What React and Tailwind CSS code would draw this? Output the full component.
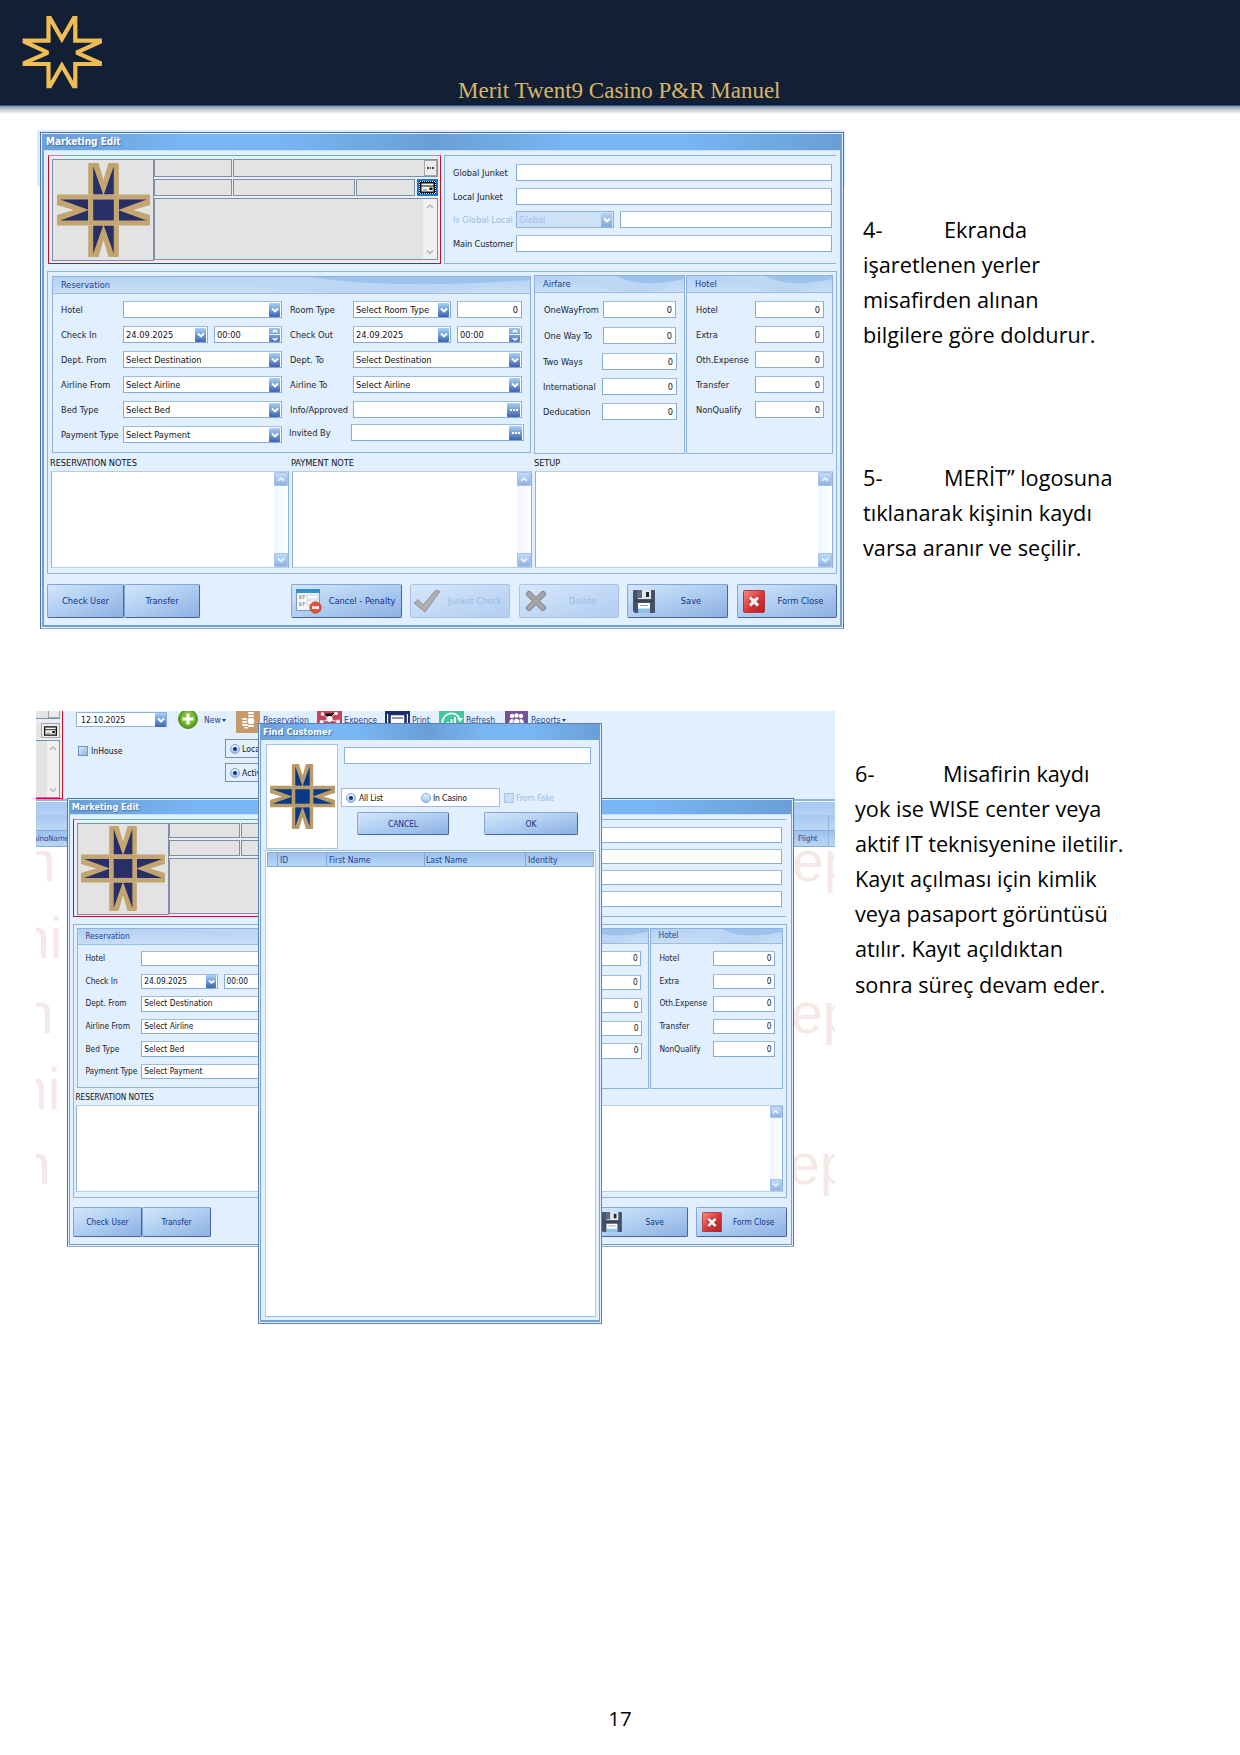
import React from "react";

/* ---------- shared drawings ---------- */

function StarLogo() {
  return (
    <svg width="84" height="76" viewBox="20 14 84 76" fill="none" stroke="#f0bc56" strokeWidth="4.2" strokeMiterlimit="2.2">
      <path d="M48.5 18.2 H50 L61.9 39 L73.800 18.2 H75.300 V40.700 H99.800 V41.800 L76.500 52.700 L99.800 62.900 V64 H75.300 V86.200 H73.800 L61.900 65.500 L50 86.200 H48.500 V64 H24.700 V62.900 L48 52.700 L24.700 41.800 V40.700 H48.500 Z" />
    </svg>
  );
}

function CrossLogo({ className, gold = "#c2a571", navy = "#282f66" }) {
  return (
    <svg className={className} viewBox="0 0 280 280" preserveAspectRatio="none">
      {[0, 90, 180, 270].map((r) => (
        <g key={r} transform={`rotate(${r} 140 140)`}>
          <path fill={gold} d="M94 3 Q94 0 98 0 L125 0 L140 50 L155 0 L182 0 Q186 0 186 3 L186 94 L94 94 Z" />
          <path fill={navy} d="M109 10 L109 94 L139 94 Z M171 10 L171 94 L141 94 Z" />
        </g>
      ))}
      <rect x="94" y="94" width="92" height="92" fill={gold} />
      <rect x="109" y="109" width="62" height="62" fill={navy} />
    </svg>
  );
}

function Chevron({ up, color = "#fff", w = 2, size = 8 }) {
  return (
    <svg width={size} height={size} viewBox="0 0 8 8" fill="none" stroke={color} strokeWidth={w}>
      <path d={up ? "M1 5.8 L4 3 L7 5.8" : "M1 2.6 L4 5.4 L7 2.6"} />
    </svg>
  );
}

function DropBtn({ faded }) {
  return (
    <span
      className={
        "flex h-[14px] w-[11px] shrink-0 items-center justify-center rounded-[1px] bg-linear-to-b " +
        (faded ? "from-[#b9d2f1] to-[#86a8dc]" : "from-[#a9d0f5] via-[#6f9cd8] to-[#3f62ad]")
      }
    >
      <Chevron />
    </span>
  );
}

function SpinBtn() {
  return (
    <span className="flex h-[14px] w-[11px] shrink-0 flex-col items-center justify-between rounded-[1px] bg-linear-to-b from-[#9cc4ef] to-[#5278be]">
      <Chevron up size={6} />
      <span className="h-px w-full bg-white/80" />
      <Chevron size={6} />
    </span>
  );
}

function DotsBtn() {
  return (
    <span className="flex h-[14px] w-[13px] shrink-0 items-center justify-center gap-px rounded-[1px] bg-linear-to-b from-[#a9d0f5] via-[#6f9cd8] to-[#3f62ad]">
      <i className="size-[2px] bg-white" />
      <i className="size-[2px] bg-white" />
      <i className="size-[2px] bg-white" />
    </span>
  );
}

function Field({ className = "", value, btn, right }) {
  return (
    <span
      className={
        "flex h-[17px] shrink-0 items-center overflow-hidden border border-[#86abd8] border-t-[#9dbce2] bg-white pr-px pl-[2px] whitespace-nowrap text-[#101018] " +
        className
      }
    >
      <span className={right ? "grow pr-[2px] text-right" : "grow"}>{value}</span>
      {btn}
    </span>
  );
}

function Label({ className = "", children }) {
  return <span className={"shrink-0 whitespace-nowrap " + className}>{children}</span>;
}

/* ---------- window chrome ---------- */

function TitleBar({ className = "text-[10px]", children }) {
  return (
    <div className={"flex h-[16px] shrink-0 items-center bg-[linear-gradient(90deg,#699fd7_0%,#78b6f4_18%,#78b6f4_29%,#699fd7_49%,#78b6f4_66%,#78b6f4_80%,#699fd7_100%)] pl-[2px] font-bold text-white [text-shadow:1px_1px_1px_#3f6ba5] " + className}>
      {children}
    </div>
  );
}

function Group({ title, className = "", children }) {
  return (
    <div className={"flex shrink-0 flex-col border border-[#8fb2dd] bg-[#e1effe] " + className}>
      <div className="relative flex h-[17px] shrink-0 items-center border-b border-[#9bbde5] bg-linear-to-b from-[#b4d1f3] to-[#c9def6]">
        <svg className="absolute inset-0 h-full w-full" viewBox="0 0 100 16" preserveAspectRatio="none">
          <path d="M22 0 C38 2 44 15 60 16 L78 16 C90 13 94 6 100 3 L100 0 Z" fill="#bcd6f4" />
          <path d="M54 0 C66 9 82 9 100 3 L100 0 Z" fill="#9cc2ee" />
        </svg>
        <span className="relative pl-[8px] text-[#1c3f94]">{title}</span>
      </div>
      {children}
    </div>
  );
}

function ScrollBtn({ up }) {
  return (
    <span className="flex h-[14px] w-[14px] items-center justify-center rounded-[1px] border border-[#a5c3ea] bg-linear-to-b from-[#bfdcf7] to-[#93b1df]">
      <Chevron up={up} color="#e4f0ff" />
    </span>
  );
}

function NoteBox({ className, title }) {
  return (
    <div className={"flex shrink-0 flex-col " + className}>
      <div className="-ml-px flex h-[18px] items-center pt-[2px] tracking-[-0.05px] text-[#101018]">{title}</div>
      <div className="flex h-[97px] justify-end border border-[#8fb2dd] border-t-[#b3cdea] border-b-[#b3cdea] bg-white">
        <div className="flex w-[14px] flex-col justify-between bg-linear-to-r from-[#f0f6fd] to-white">
          <ScrollBtn up />
          <ScrollBtn />
        </div>
      </div>
    </div>
  );
}

function Button({ className = "", icon, children, disabled }) {
  return (
    <div
      className={
        "flex shrink-0 items-center rounded-[2px] border bg-linear-to-br " +
        (disabled
          ? "border-[#a9c3e8] from-[#d6e8fb] via-[#c3daf5] to-[#b3cdf0] text-[#9dbbe8] "
          : "border-[#86a6d8] border-r-[#48639f] border-b-[#48639f] from-[#d3e6fa] via-[#aecdf1] to-[#8eb0e2] text-[#14308a] ") +
        className
      }
    >
      {icon}
      <span className="grow text-center whitespace-nowrap">{children}</span>
    </div>
  );
}

/* ---------- button icons ---------- */

const CancelIcon = () => (
  <svg width="28" height="28" viewBox="0 0 28 28" className="shrink-0">
    <rect x="1.5" y="2.5" width="23" height="21" fill="#f4f8fb" stroke="#7d9bb8" />
    <rect x="1" y="2" width="24" height="4" fill="#2f93d0" />
    <rect x="12" y="8" width="11" height="4" fill="#fff" stroke="#b9c2c8" strokeWidth=".7" />
    <rect x="12" y="14" width="11" height="4" fill="#fff" stroke="#b9c2c8" strokeWidth=".7" />
    <path d="M4 9h2m1 0h3M4 11h3m1 0h1M4 16h2m1 0h3M4 18h3m1 0h1" stroke="#777" strokeWidth="1" />
    <circle cx="20.5" cy="20.5" r="5.800" fill="#e2533b" stroke="#b83b2b" strokeWidth=".6" />
    <rect x="17" y="19.300" width="7" height="2.600" fill="#fff" />
  </svg>
);
const CheckIcon = () => (
  <svg width="28" height="26" viewBox="0 0 28 26" className="shrink-0">
    <path d="M1 15 L5 11.5 L10 17 L23 2 L27 3.5 L12 24 Z" fill="#b0b0b0" stroke="#8a8f96" strokeWidth=".9" />
  </svg>
);
const CrossIcon = () => (
  <svg width="22" height="22" viewBox="0 0 22 22" className="shrink-0">
    <path d="M4 4 L18 18 M18 4 L4 18" stroke="#808388" strokeWidth="6" strokeLinecap="round" />
    <path d="M4 4 L18 18 M18 4 L4 18" stroke="#a6a6a6" strokeWidth="4.2" strokeLinecap="round" />
  </svg>
);
const SaveIcon = () => (
  <svg width="22" height="23" viewBox="0 0 22 23" className="shrink-0">
    <path d="M1 0 H21 Q22 0 22 1 V22 Q22 23 21 23 H2 L0 21 V1 Q0 0 1 0Z" fill="#46526a" />
    <rect x="5" y="0" width="13" height="9" fill="#e3e6ea" />
    <rect x="4" y="0" width="5" height="8" fill="#5f6a80" />
    <rect x="13" y="2" width="3" height="5" fill="#20283a" />
    <rect x="1.5" y="10" width="19" height="2" fill="#39445a" />
    <rect x="5" y="13" width="12" height="9.5" fill="#fff" />
    <rect x="7" y="15" width="8" height="1" fill="#8fa0b5" />
    <rect x="5" y="18.5" width="12" height="4" fill="#8cc1ea" />
  </svg>
);
const CloseIcon = () => (
  <svg width="22" height="23" viewBox="0 0 22 23" className="shrink-0">
    <defs>
      <linearGradient id="closeRed" x1="0" y1="0" x2="1" y2="1">
        <stop offset="0" stopColor="#fb8a84" />
        <stop offset=".5" stopColor="#dc3a3a" />
        <stop offset="1" stopColor="#b01d22" />
      </linearGradient>
    </defs>
    <rect x=".5" y=".5" width="21" height="22" rx="1" fill="url(#closeRed)" stroke="#a83a40" />
    <path d="M7 7.5 L15 15.5 M15 7.5 L7 15.5" stroke="#8d1b20" strokeWidth="4.8" />
    <path d="M7 7.5 L15 15.5 M15 7.5 L7 15.5" stroke="#f3eef0" strokeWidth="3.4" />
  </svg>
);
const CardIcon = ({ width = 15, height = 11 }) => (
  <svg width={width} height={height} viewBox="0 0 15 11" className="shrink-0">
    <rect x=".75" y=".75" width="13.5" height="9.5" fill="#f3f3f3" stroke="#111" strokeWidth="1.5" />
    <path d="M1 4h13" stroke="#111" />
    <rect x="9.5" y="5.5" width="3" height="2.5" fill="#111" />
    <path d="M3 8h4" stroke="#777" />
  </svg>
);

/* ---------- Marketing Edit window ---------- */

const cell = "shrink-0 border border-[#7f8fa3] bg-[#e3e3e3] ";

function CustomerPanel() {
  return (
    <div className="flex h-[109px] w-[393px] shrink-0 border border-[#bb1727] border-t-[#d5808f] bg-[#e8eff8] py-[3px] pl-[3px]">
      <div className={cell + "flex h-[102px] w-[102px] items-center justify-center"}>
        <CrossLogo className="h-[94px] w-[93px]" />
      </div>
      <div className="flex w-[285px] flex-col">
        <div className="flex h-[18px] gap-px">
          <div className={cell + "w-[78px]"} />
          <div className={cell + "flex w-[205px] justify-end"}>
            <span className="flex h-full w-[13px] items-center justify-center gap-px border border-[#a5a5a5] bg-[#ebebeb]">
              <i className="size-[1.5px] bg-[#444]" />
              <i className="size-[1.5px] bg-[#444]" />
              <i className="size-[1.5px] bg-[#444]" />
            </span>
          </div>
        </div>
        <div className="mt-[2px] flex h-[18px] gap-px">
          <div className={cell + "w-[78px]"} />
          <div className={cell + "w-[122px]"} />
          <div className={cell + "w-[59px]"} />
          <div className="ml-px flex h-[17px] w-[21px] items-center justify-center self-center border-2 border-[#1678d0] bg-[#f0f0f0]">
            <span className="border border-dotted border-black">
              <CardIcon />
            </span>
          </div>
        </div>
        <div className={cell + "mt-[2px] flex h-[62px] w-[284px] justify-end"}>
          <div className="flex w-[14px] flex-col items-center justify-between bg-[#f0f0f0] py-[3px]">
            <Chevron up color="#b9bcbf" w={1.6} />
            <Chevron color="#b9bcbf" w={1.6} />
          </div>
        </div>
      </div>
    </div>
  );
}

function JunketPanel() {
  return (
    <div className="ml-[3px] h-[109px] w-[392px] shrink-0 border-y border-l border-[#8fb2dd] pt-[8px] pl-[8px]">
      <div className="flex items-center"><Label className="w-[63px]">Global Junket</Label><Field className="w-[316px]" /></div>
      <div className="mt-[7px] flex items-center"><Label className="w-[63px]">Local Junket</Label><Field className="w-[316px]" /></div>
      <div className="mt-[6px] flex items-center text-[#9dbbe6]">
        <Label className="w-[63px]">Is Global Local</Label>
        <span className="flex h-[17px] w-[98px] items-center justify-between border border-[#8fb2dd] bg-[#cfe1f6] pr-px pl-[2px]">
          Global
          <DropBtn faded />
        </span>
        <Field className="ml-[6px] w-[212px]" />
      </div>
      <div className="mt-[7px] flex items-center"><Label className="w-[63px] tracking-[-0.15px]">Main Customer</Label><Field className="w-[316px]" /></div>
    </div>
  );
}

function MarketingEdit() {
  return (
    <div className="flex h-[497px] w-[804px] flex-col border border-[#4a73ab] border-b-[#8fa9cf] bg-[#e4f0fd] p-px text-[9.2px] leading-[12px] text-[#20242e]">
      <div className="flex grow flex-col border-x-2 border-b-2 border-[#74a0d2] bg-[#e1effe]">
        <TitleBar>Marketing Edit</TitleBar>
        <div className="border-t border-[#c9dff7] pt-[4px] pl-[3px]">
          <div className="flex pl-px">
            <CustomerPanel />
            <JunketPanel />
          </div>

          <div className="mt-[7px] h-[303px] w-[790px] border border-[#8fb2dd] pt-[3px]">
            <div className="flex h-[179px] items-start pl-[4px]">
              <Group title="Reservation" className="mt-px h-[177px] w-[479px]">
                <div className="flex pt-[7px] pl-[8px]">
                  <div className="flex flex-col gap-[8px]">
                    <div className="flex items-center"><Label className="w-[62px]">Hotel</Label><Field className="w-[159px]" btn={<DropBtn />} /></div>
                    <div className="flex items-center">
                      <Label className="w-[62px]">Check In</Label>
                      <Field className="w-[85px]" value="24.09.2025" btn={<DropBtn />} />
                      <Field className="ml-[6px] w-[68px]" value="00:00" btn={<SpinBtn />} />
                    </div>
                    <div className="flex items-center"><Label className="w-[62px]">Dept. From</Label><Field className="w-[159px]" value="Select Destination" btn={<DropBtn />} /></div>
                    <div className="flex items-center"><Label className="w-[62px]">Airline From</Label><Field className="w-[159px]" value="Select Airline" btn={<DropBtn />} /></div>
                    <div className="flex items-center"><Label className="w-[62px]">Bed Type</Label><Field className="w-[159px]" value="Select Bed" btn={<DropBtn />} /></div>
                    <div className="flex items-center"><Label className="w-[62px]">Payment Type</Label><Field className="w-[159px]" value="Select Payment" btn={<DropBtn />} /></div>
                  </div>
                  <div className="ml-[8px] flex flex-col gap-[8px]">
                    <div className="flex items-center">
                      <Label className="w-[63px]">Room Type</Label>
                      <Field className="w-[98px]" value="Select Room Type" btn={<DropBtn />} />
                      <Field className="ml-[6px] w-[65px]" right value="0" />
                    </div>
                    <div className="flex items-center">
                      <Label className="w-[63px]">Check Out</Label>
                      <Field className="w-[98px]" value="24.09.2025" btn={<DropBtn />} />
                      <Field className="ml-[6px] w-[65px]" value="00:00" btn={<SpinBtn />} />
                    </div>
                    <div className="flex items-center"><Label className="w-[63px]">Dept. To</Label><Field className="w-[169px]" value="Select Destination" btn={<DropBtn />} /></div>
                    <div className="flex items-center"><Label className="w-[63px]">Airline To</Label><Field className="w-[169px]" value="Select Airline" btn={<DropBtn />} /></div>
                    <div className="flex items-center"><Label className="w-[63px]">Info/Approved</Label><Field className="w-[169px]" btn={<DotsBtn />} /></div>
                    <div className="-mt-[2px] -ml-px flex items-center"><Label className="w-[62px]">Invited By</Label><Field className="w-[173px]" btn={<DotsBtn />} /></div>
                  </div>
                </div>
              </Group>

              <Group title="Airfare" className="ml-[3px] h-[179px] w-[151px]">
                <div className="flex flex-col pt-[8px] pl-[9px]">
                  <div className="flex items-center"><Label className="w-[59px]">OneWayFrom</Label><Field className="w-[73px]" right value="0" /></div>
                  <div className="mt-[9px] flex items-center"><Label className="w-[59px]">One Way To</Label><Field className="w-[73px]" right value="0" /></div>
                  <div className="mt-[9px] -ml-px flex items-center"><Label className="w-[59px]">Two Ways</Label><Field className="w-[75px]" right value="0" /></div>
                  <div className="mt-[8px] -ml-px flex items-center"><Label className="w-[59px]">International</Label><Field className="w-[75px]" right value="0" /></div>
                  <div className="mt-[8px] -ml-px flex items-center"><Label className="w-[59px]">Deducation</Label><Field className="w-[75px]" right value="0" /></div>
                </div>
              </Group>

              <Group title="Hotel" className="ml-px h-[179px] w-[147px]">
                <div className="flex flex-col gap-[8px] pt-[8px] pl-[9px]">
                  {["Hotel", "Extra", "Oth.Expense", "Transfer", "NonQualify"].map((t) => (
                    <div key={t} className="flex items-center"><Label className="w-[59px]">{t}</Label><Field className="w-[69px]" right value="0" /></div>
                  ))}
                </div>
              </Group>
            </div>

            <div className="-mt-px flex gap-[3px] pl-[3px]">
              <NoteBox className="w-[238px]" title="RESERVATION NOTES" />
              <NoteBox className="w-[240px]" title="PAYMENT NOTE" />
              <NoteBox className="w-[298px]" title="SETUP" />
            </div>
          </div>

          <div className="mt-[10px] flex h-[34px]">
            <Button className="w-[77px]">Check User</Button>
            <Button className="w-[76px]">Transfer</Button>
            <Button className="ml-[91px] w-[111px] pl-[3px]" icon={<CancelIcon />}>Cancel - Penalty</Button>
            <Button disabled className="ml-[8px] w-[100px] pl-[2px]" icon={<CheckIcon />}>Junket Check</Button>
            <Button disabled className="ml-[9px] w-[100px] pl-[5px]" icon={<CrossIcon />}>Delete</Button>
            <Button className="ml-[8px] w-[101px] pl-[5px]" icon={<SaveIcon />}>Save</Button>
            <Button className="ml-[9px] w-[100px] pl-[5px]" icon={<CloseIcon />}>Form Close</Button>
          </div>
        </div>
      </div>
    </div>
  );
}

/* ---------- Find Customer dialog ---------- */

function Radio({ on }) {
  return (
    <span className="flex size-[10px] shrink-0 items-center justify-center rounded-full border border-[#7fa3d6] bg-linear-to-b from-[#e8f3ff] to-[#9fc2ee]">
      {on && <i className="size-[4px] rounded-full bg-[#16306e]" />}
    </span>
  );
}

function FindCustomer() {
  return (
    <div className="flex h-[601px] w-[344px] flex-col border border-[#5c80b5] bg-[#e4f0fd] p-px pt-0 text-[8.6px] leading-[12px] text-[#101018]">
      <div className="flex grow flex-col border-x border-b-2 border-[#74a0d2] bg-[#e1effe] pb-[3px]">
        <TitleBar className="text-[9.3px]">Find Customer</TitleBar>
        <div className="flex h-[110px] shrink-0 pt-[4px] pl-[5px]">
          <div className="flex h-[105px] w-[72px] shrink-0 items-center justify-center border border-[#a9c6ea] bg-white">
            <CrossLogo className="h-[65px] w-[65px]" gold="#b99a6b" navy="#063a86" />
          </div>
          <div className="flex flex-col pl-[3px]">
            <span className="mt-[3px] ml-[3px] h-[17px] w-[247px] border border-[#8fb2dd] bg-white" />
            <div className="mt-[24px] flex items-center">
              <div className="flex h-[19px] w-[159px] items-center border border-[#9bbce3] bg-white pl-[4px]">
                <Radio on />
                <span className="w-[65px] pl-[3px] tracking-[-0.2px]">All List</span>
                <Radio />
                <span className="pl-[2px] tracking-[-0.2px]">In Casino</span>
              </div>
              <span className="ml-[4px] size-[10px] border border-[#a9c6ea] bg-[#c8dff7]" />
              <span className="pl-[2px] tracking-[-0.1px] text-[#9dbbe6]">From Fake</span>
            </div>
            <div className="mt-[5px] flex pl-[16px]">
              <Button className="h-[23px] w-[92px] tracking-[-0.2px]">CANCEL</Button>
              <Button className="ml-[35px] h-[23px] w-[94px]">OK</Button>
            </div>
          </div>
        </div>
        <div className="mr-[3px] ml-[4px] grow border border-[#9bbce3] border-x-[#b3cdea] bg-white p-px">
          <div className="flex h-[15px] items-center border border-[#86abd8] bg-linear-to-b from-[#9cc1ee] to-[#b9d6f6] text-[#1c3f94]">
            <span className="h-full w-[10px] border-r border-[#7fa5d6]" />
            <span className="flex h-full w-[49px] items-center border-r border-[#7fa5d6] pl-[2px]">ID</span>
            <span className="flex h-full w-[98px] items-center border-r border-[#7fa5d6] pl-[2px]">First Name</span>
            <span className="flex h-full w-[101px] items-center border-r border-[#7fa5d6] pl-px">Last Name</span>
            <span className="pl-[2px]">Identity</span>
          </div>
        </div>
      </div>
    </div>
  );
}

/* ---------- toolbar icons ---------- */

const NewIcon = () => (
  <svg width="20" height="20" viewBox="0 0 20 20">
    <circle cx="10" cy="10" r="9.4" fill="#5fa81f" stroke="#3f7d18" />
    <circle cx="10" cy="9" r="7" fill="#8cc63f" opacity=".7" />
    <path d="M10 4.5v11M4.5 10h11" stroke="#fff" strokeWidth="3.2" />
  </svg>
);
const ReservationIcon = () => (
  <svg width="24" height="24" viewBox="0 0 24 24">
    <rect width="24" height="24" rx="1" fill="#c69a6b" />
    <g fill="#fff">
      <rect x="12" y="3" width="6" height="2" rx="1" /><rect x="12" y="6" width="6" height="2" rx="1" />
      <rect x="6" y="9" width="5" height="2" rx="1" /><rect x="6" y="12" width="5" height="2" rx="1" />
      <rect x="6" y="15" width="6" height="2" rx="1" /><ellipse cx="15" cy="12" rx="3.4" ry="3.2" />
      <rect x="12" y="16" width="6" height="2" rx="1" /><rect x="8" y="18" width="4" height="1.500" rx=".7" />
    </g>
  </svg>
);
const ExpenceIcon = () => (
  <svg width="25" height="24" viewBox="0 0 25 24">
    <rect width="25" height="24" fill="#c8435a" />
    <path d="M6 5L12.5 10L18 4M12.500 10L5 13M12.500 10L21 13" stroke="#fff" strokeWidth=".9" />
    <g fill="#fff">
      <circle cx="12.5" cy="10" r="3" /><circle cx="5.500" cy="5" r="1.800" /><circle cx="19" cy="4.500" r="1.800" />
      <circle cx="4.500" cy="13" r="1.900" /><circle cx="21" cy="12.500" r="1.900" />
    </g>
  </svg>
);
const PrintIcon = () => (
  <svg width="25" height="24" viewBox="0 0 25 24">
    <rect width="25" height="24" fill="#1c2e6b" />
    <rect x="2" y="5" width="21" height="19" fill="#e1effe" />
    <path d="M4.500 24V5H20.500V24" fill="#fff" stroke="#1c2e6b" strokeWidth="2.600" />
    <path d="M7 9h11" stroke="#1c2e6b" strokeWidth="1" />
  </svg>
);
const RefreshIcon = () => (
  <svg width="25" height="24" viewBox="0 0 25 24">
    <rect width="25" height="24" fill="#3fc79f" />
    <path d="M4 17A9 9 0 1 1 21 10" fill="none" stroke="#fff" strokeWidth="1.8" />
    <path d="M18 9h6l-3 4z" fill="#fff" />
    <path d="M9 18v-5M12.5 18V10M16 18V8" stroke="#fff" strokeWidth="2" />
  </svg>
);
const ReportsIcon = () => (
  <svg width="23" height="24" viewBox="0 0 23 24">
    <rect width="23" height="24" fill="#74509a" />
    <g fill="#fff">
      <circle cx="7" cy="7" r="2.200" /><circle cx="16" cy="7" r="2.200" /><circle cx="11.5" cy="6.5" r="2.300" />
      <path d="M4 16q0-6 3-6t3 6zM13 16q0-6 3-6t3 6z" />
      <path d="M8 16q0-6.800 3.500-6.800t3.500 6.800z" stroke="#74509a" strokeWidth=".7" />
    </g>
  </svg>
);

const DownTick = () => (
  <span className="-ml-[1px] inline-block border-x-[2px] border-t-[3px] border-x-transparent border-t-[#1c3f94] align-middle" />
);

/* repeating desktop watermark: [row, offset of the left word, word, offset of the right word] */
const marks = [
  ["top-[118px]", "ml-[-12px]", "n", "ml-[768px]"],
  ["top-[195px]", "ml-[-18px]", "ni", ""],
  ["top-[270px]", "ml-[-14px]", "n", "ml-[769px]"],
  ["top-[346px]", "ml-[-20px]", "ni", ""],
  ["top-[421px]", "ml-[-17px]", "n", "ml-[769px]"],
];

function SecondScreen() {
  return (
    <div className="relative h-[613px] w-[799px] shrink-0 overflow-hidden bg-white text-[8.6px] leading-[12px] text-[#101018]">
      <div className="flex h-[88px] bg-[#e1effe]">
        <div className="flex w-[27px] shrink-0 flex-col border-r border-b border-[#bb1727] bg-[#e8eff8] pr-[2px]">
          <div className="flex h-[8px] justify-end border-b border-[#7f8fa3] bg-[#e3e3e3]">
            <span className="w-[12px] border border-t-0 border-[#a5a5a5] bg-[#ebebeb]" />
          </div>
          <div className="mt-[4px] flex h-[15px] justify-end bg-[#e3e3e3]">
            <span className="flex w-[19px] items-center justify-center border border-[#a5a5a5] bg-[#ececec]">
              <CardIcon width={13} height={10} />
            </span>
          </div>
          <div className="mt-[2px] flex grow justify-end border border-l-0 border-[#7f8fa3] bg-[#e3e3e3]">
            <div className="flex w-[12px] flex-col items-center justify-between bg-[#f0f0f0] py-[3px]">
              <Chevron up color="#b9bcbf" w={1.6} />
              <Chevron color="#b9bcbf" w={1.6} />
            </div>
          </div>
        </div>

        <div className="flex grow flex-col">
          <div className="-mt-[2px] flex h-[24px] items-start text-[#1c3f94]">
            <span className="mt-[3px] ml-[13px] flex h-[15px] w-[91px] items-center justify-between border border-[#8fb2dd] bg-white pl-[4px] text-[#101018]">
              12.10.2025
              <DropBtn />
            </span>
            <span className="ml-[11px] w-[26px]"><NewIcon /></span>
            <span className="mt-[5px] w-[32px] whitespace-nowrap">New <DownTick /></span>
            <span className="w-[27px]"><ReservationIcon /></span>
            <span className="mt-[5px] w-[54px]">Reservation</span>
            <span className="w-[27px]"><ExpenceIcon /></span>
            <span className="mt-[5px] w-[41px]">Expence</span>
            <span className="w-[27px]"><PrintIcon /></span>
            <span className="mt-[5px] w-[27px]">Print</span>
            <span className="w-[27px]"><RefreshIcon /></span>
            <span className="mt-[5px] w-[39px]">Refresh</span>
            <span className="w-[26px]"><ReportsIcon /></span>
            <span className="mt-[5px] w-[50px] whitespace-nowrap">Reports <DownTick /></span>
          </div>
          <div className="flex items-start pt-[6px] pl-[15px]">
            <span className="mt-[7px] size-[10px] border border-[#6f95cc] bg-linear-to-br from-[#d5e7fb] to-[#8eb5e8]" />
            <span className="mt-[6px] w-[137px] pl-[3px]">InHouse</span>
            <div className="flex flex-col gap-[5px]">
              <div className="flex h-[19px] w-[60px] items-center gap-[2px] border border-[#7f8fa3] pl-[4px]"><Radio on />Local</div>
              <div className="flex h-[19px] w-[60px] items-center gap-[2px] border border-[#7f8fa3] pl-[4px]"><Radio on />Active</div>
            </div>
          </div>
        </div>
      </div>

      <div className="flex h-[48px] flex-col border-t-2 border-b border-t-[#8fb4e0] border-b-[#86abd8] text-[#1c3f94]">
        <div className="h-[14px] border-t border-white bg-linear-to-b from-[#a4c8f0] to-[#b4d2f4]" />
        <div className="flex h-[15px] justify-end bg-linear-to-b from-[#a6c9f0] to-[#bcd7f5]">
          <span className="w-[7px] border-l border-[#8fb4e0]" />
        </div>
        <div className="flex grow items-center justify-between border-t border-[#86abd8] bg-linear-to-b from-[#9dc2ee] to-[#b9d5f5] text-[7.8px]">
          <span className="w-[31px] -ml-[2px]">sinoName</span>
          <span className="flex h-full w-[37px] items-center"><span className="grow">Flight</span><i className="h-full w-[7px] border-l border-[#8fb4e0]" /></span>
        </div>
      </div>

      {marks.map(([top, left, word, right]) => (
        <div key={top} className={"absolute left-0 flex h-[64px] items-center font-['Liberation_Sans'] text-[57px] leading-[64px] whitespace-nowrap text-[#f7e8e8] " + top}>
          <span className={"w-0 " + left}>{word}</span>
          {right && <span className={right}>ep</span>}
        </div>
      ))}

      <div className="absolute top-[87px] left-[31px]">
        <div className="[zoom:0.904]">
          <MarketingEdit />
        </div>
      </div>
      <div className="absolute top-[12px] left-[222px]">
        <FindCustomer />
      </div>
    </div>
  );
}

/* ---------- page ---------- */

function Note({ lead, lines, tab }) {
  return (
    <p className="leading-[35.1px] whitespace-nowrap">
      <span className="flex"><span className={tab}>{lead}</span>{lines[0]}</span>
      {lines.slice(1).map((l) => (
        <span key={l} className="block">{l}</span>
      ))}
    </p>
  );
}

export default function App() {
  return (
    <div className="flex h-[1755px] w-[1240px] flex-col bg-white font-['DejaVu_Sans_Condensed','DejaVu_Sans',sans-serif] [font-stretch:condensed]">
      <header className="h-[130px]">
        <div className="flex h-[106px] border-b border-[#2f5580] bg-[#131f35]">
          <div className="w-[458px] pt-[14px] pl-[20px]"><StarLogo /></div>
          <h1 className="pt-[78px] font-['Liberation_Serif',serif] text-[23px] leading-[26px] whitespace-nowrap text-[#d6b768]">
            Merit Twent9 Casino P&amp;R Manuel
          </h1>
        </div>
        <div className="h-[8px] bg-linear-to-b from-[#7a98b8] via-[#cfcfcf] to-white" />
      </header>

      <section className="flex h-[581px]">
        <div className="w-[863px] shrink-0 pl-[37px]">
          <div className="h-[56px] w-[808px] bg-[#dbeafb] pt-[2px] pl-[3px]">
            <MarketingEdit />
          </div>
        </div>
        <div className="pt-[82px] font-['Open_Sans',sans-serif] text-[21.7px] text-black [font-stretch:normal]">
          <Note tab="w-[81px]" lead="4-" lines={["Ekranda", "işaretlenen yerler", "misafirden alınan", "bilgilere göre doldurur."]} />
          <div className="h-[107.6px]" />
          <Note tab="w-[81px]" lead="5-" lines={["MERİT” logosuna", "tıklanarak kişinin kaydı", "varsa aranır ve seçilir."]} />
        </div>
      </section>

      <section className="flex h-[988px] pl-[36px]">
        <SecondScreen />
        <div className="pt-[45px] pl-[20px] font-['Open_Sans',sans-serif] text-[21.7px] text-black [font-stretch:normal]">
          <Note
            tab="w-[88px]"
            lead="6-"
            lines={["Misafirin kaydı", "yok ise WISE center veya", "aktif IT teknisyenine iletilir.", "Kayıt açılması için kimlik", "veya pasaport görüntüsü", "atılır. Kayıt açıldıktan", "sonra süreç devam eder."]}
          />
        </div>
      </section>

      <footer className="pt-px text-center font-['Open_Sans',sans-serif] text-[20.5px] leading-[36px] text-black [font-stretch:normal]">17</footer>
    </div>
  );
}
